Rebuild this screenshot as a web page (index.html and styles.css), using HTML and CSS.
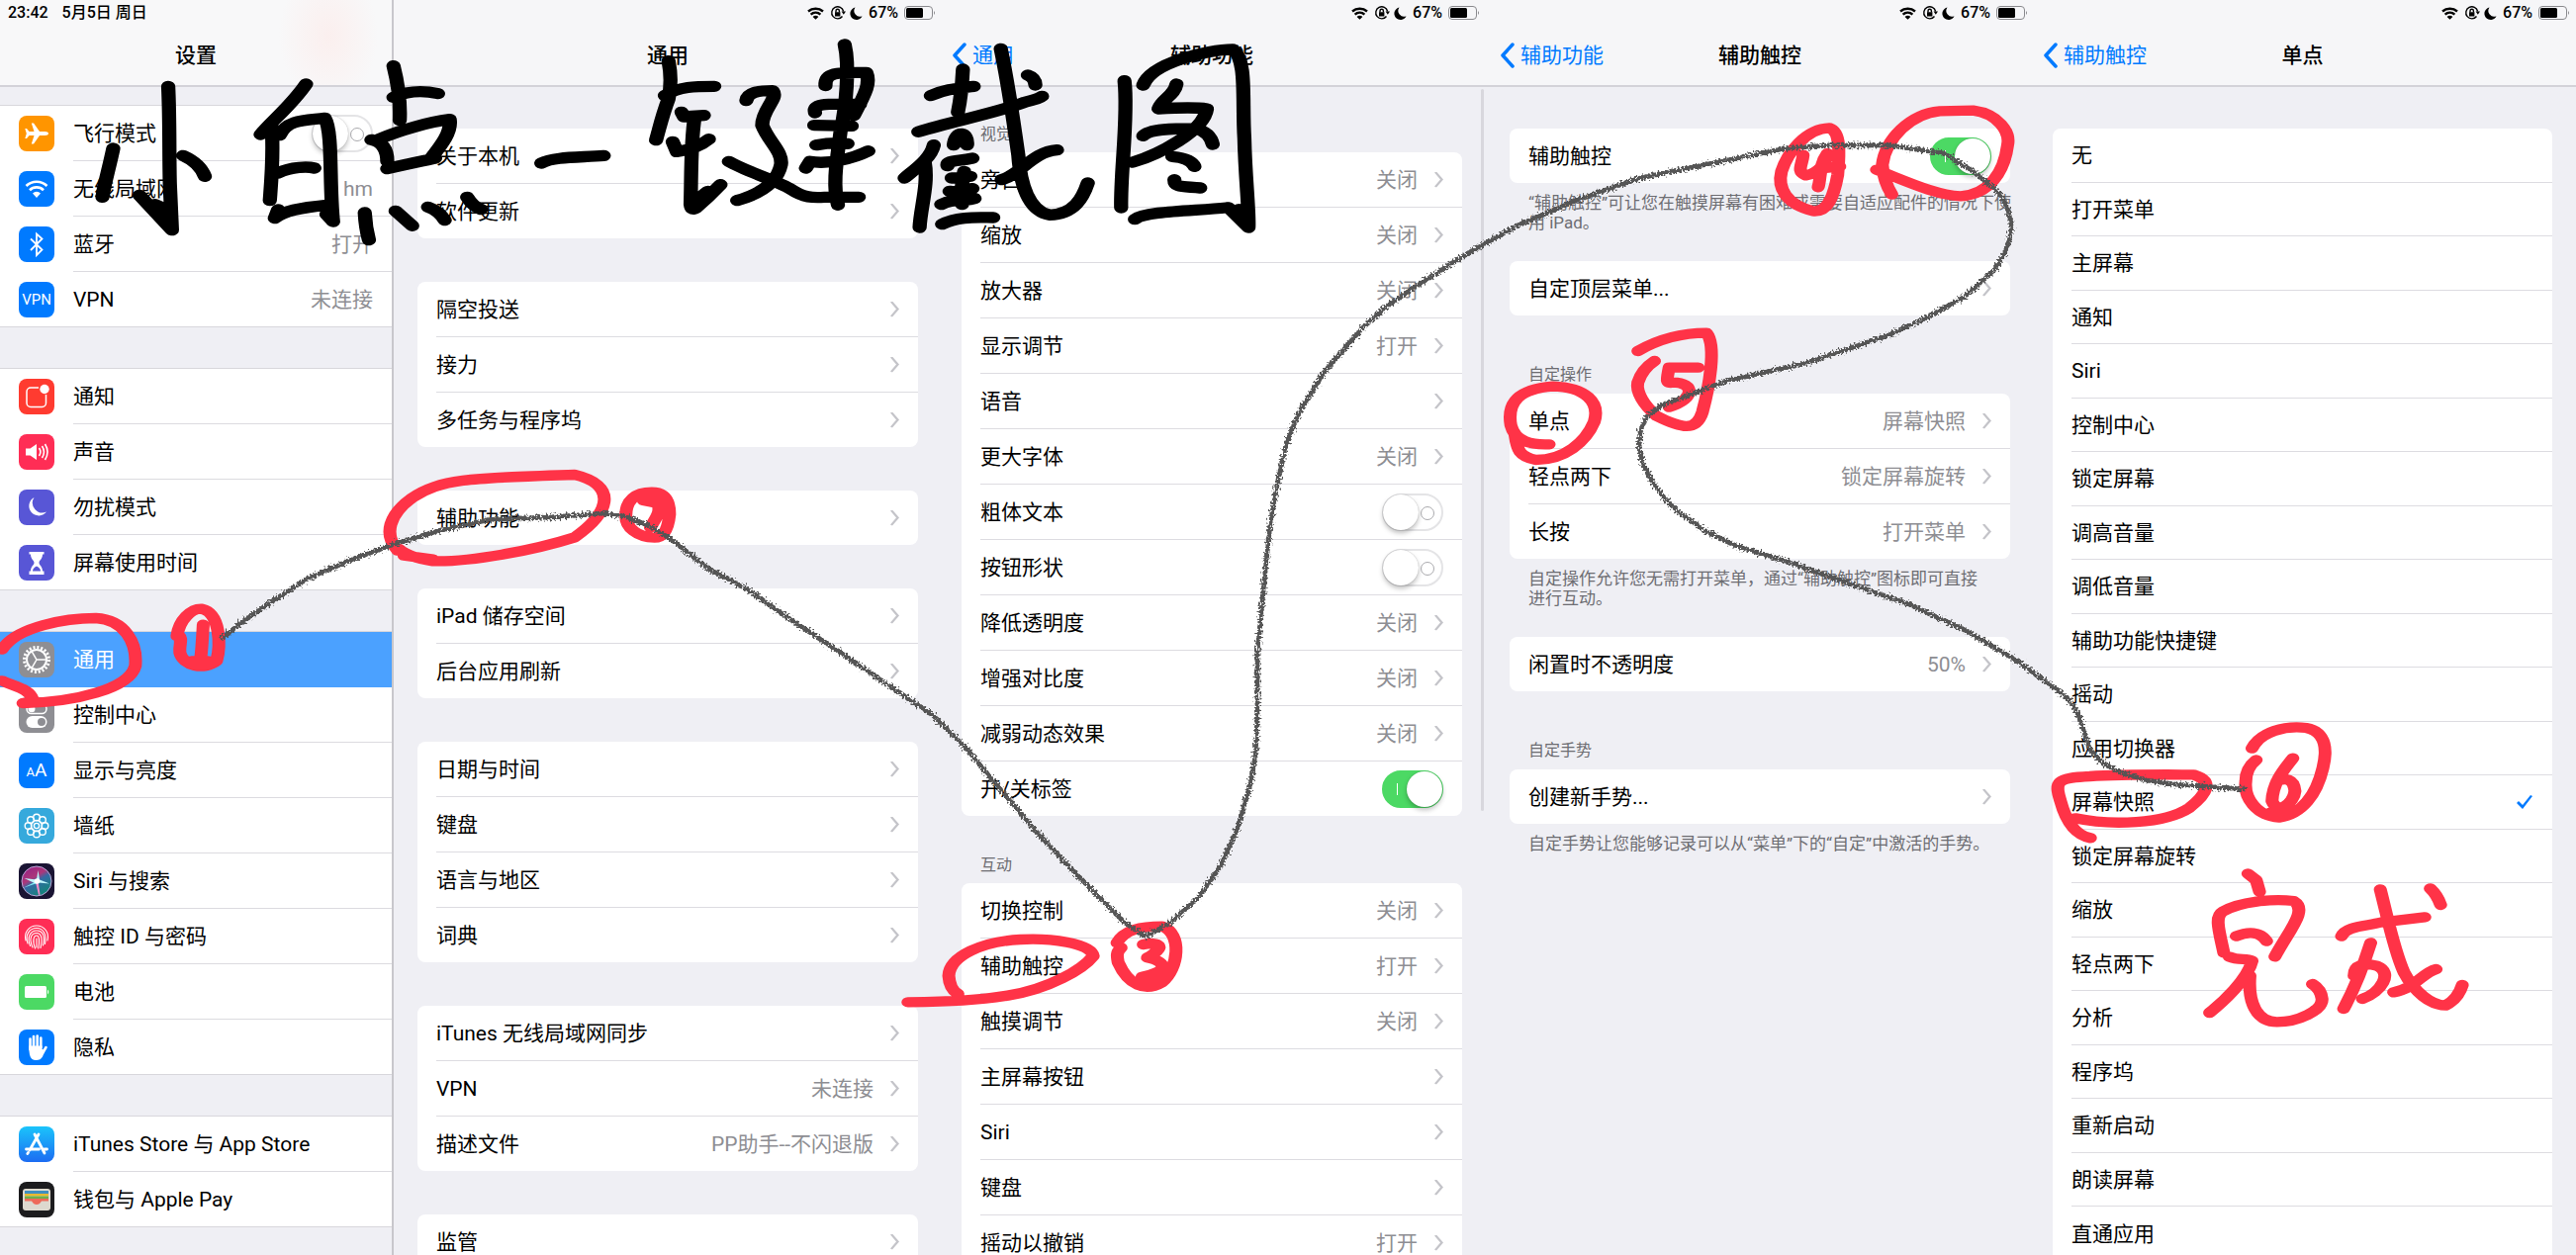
FILE: index.html
```html
<!DOCTYPE html>
<html lang="zh-CN">
<head>
<meta charset="utf-8">
<title>小白点一键截图</title>
<meta name="viewport" content="width=device-width, initial-scale=1">
<link rel="stylesheet" href="styles.css">
</head>
<body>
<svg class="defs" aria-hidden="true">
  <defs>
    <symbol id="status" viewBox="0 0 56 16">
      <g fill="none" stroke="#000" stroke-width="2.4">
        <path d="M1 6.5a11.500 11.500 0 0 1 15 0M3.600 9.600a7.500 7.500 0 0 1 9.800 0"/>
      </g>
      <path d="M5.600 12a4 4 0 0 1 5.800 0L8.500 14.800z"/>
      <g fill="none" stroke="#000" stroke-width="1.400">
        <path d="M35.500 11.500A6 6 0 1 1 36.600 6.500"/>
        <path d="M29 7.500V6a1.700 1.700 0 0 1 3.400 0v1.500"/>
      </g>
      <path d="M28 7.200h5.400v4.200H28zM34.600 6.500h4.400l-2.200 3.200z"/>
      <path d="M48.500 2.500a6.300 6.300 0 1 0 7 8.700 5.800 5.800 0 0 1-7-8.700z"/>
    </symbol>
    <symbol id="batt" viewBox="0 0 32 14">
      <rect x=".5" y=".5" width="28" height="13" rx="3.500" fill="none" stroke="#8a8a8e"/>
      <rect x="2" y="2" width="17" height="10" rx="1.500"/>
      <path d="M30 5q2 2 0 4z" fill="#8a8a8e"/>
    </symbol>
    <symbol id="back" viewBox="0 0 15 26"><path d="M13 2 3 13l10 11" fill="none" stroke="#007aff" stroke-width="3.500" stroke-linecap="round" stroke-linejoin="round"/></symbol>
    <linearGradient id="store" x2="0" y2="1"><stop stop-color="#1bc4fb"/><stop offset="1" stop-color="#1c6cf2"/></linearGradient>
    <linearGradient id="siri" x2=".6" y2="1"><stop stop-color="#b01f9a"/><stop offset=".45" stop-color="#d0408c"/><stop offset=".6" stop-color="#3a7fc0"/><stop offset="1" stop-color="#12a08c"/></linearGradient>
    <filter id="pencil" x="-5%" y="-5%" width="110%" height="110%">
      <feTurbulence type="fractalNoise" baseFrequency=".5" numOctaves="2" seed="4" result="n"/>
      <feDisplacementMap in="SourceGraphic" in2="n" scale="9" xChannelSelector="R" yChannelSelector="G"/>
    </filter>
  </defs>
</svg>

<main class="board">

<section class="panel side">
  <header class="bar">
    <div class="status"><span>23:42</span><span class="date">5月5日 周日</span></div>
    <div class="nav"><h1>设置</h1></div>
  </header>
  <div class="menu">
    <ul class="sgroup">
      <li><label class="srow"><svg class="ic" viewBox="0 0 36 36"><rect width="36" height="36" rx="8" fill="#ff9500"/><path fill="#fff" d="M30 18c0-1.200-1.500-2-3.500-2h-5.500L15 7.500h-2.200L15.500 16h-5L8 13H6.300l1.500 5-1.500 5H8l2.500-3h5l-2.700 8.500H15L21 20h5.500c2 0 3.500-.8 3.500-2z"/></svg><span class="sb"><span>飞行模式</span><input class="sw" type="checkbox"></span></label></li>
      <li><a class="srow" href="#"><svg class="ic" viewBox="0 0 36 36"><rect width="36" height="36" rx="8" fill="#007aff"/><g fill="none" stroke="#fff" stroke-width="2.600"><path d="M7.500 15a15 15 0 0 1 21 0M11 19.200a10 10 0 0 1 14 0"/></g><path fill="#fff" d="M14 22.500a5.500 5.500 0 0 1 8 0l-4 4.500z"/></svg><span class="sb"><span>无线局域网</span><span class="val">hm</span></span></a></li>
      <li><a class="srow" href="#"><svg class="ic" viewBox="0 0 36 36"><rect width="36" height="36" rx="8" fill="#007aff"/><path fill="none" stroke="#fff" stroke-width="1.800" d="m12 12.500 11.500 11L18 29V7.500l5.500 5L12 24"/></svg><span class="sb"><span>蓝牙</span><span class="val">打开</span></span></a></li>
      <li><a class="srow" href="#"><span class="ic txt vpn">VPN</span><span class="sb"><span>VPN</span><span class="val">未连接</span></span></a></li>
    </ul>
    <ul class="sgroup">
      <li><a class="srow" href="#"><svg class="ic" viewBox="0 0 36 36"><rect width="36" height="36" rx="8" fill="#ff3b30"/><path fill="none" stroke="#fff" stroke-width="1.500" d="M20 9h-8a4 4 0 0 0-4 4v11.500a4 4 0 0 0 4 4h11.500a4 4 0 0 0 4-4V16"/><circle cx="26" cy="10.500" r="4.700" fill="#fff"/></svg><span class="sb"><span>通知</span></span></a></li>
      <li><a class="srow" href="#"><svg class="ic" viewBox="0 0 36 36"><rect width="36" height="36" rx="8" fill="#ff2d55"/><path fill="#fff" d="M7 14.500h4.500L18 10v16l-6.500-4.500H7z"/><path fill="none" stroke="#fff" stroke-width="1.600" d="M20.500 14a7 7 0 0 1 0 8M23.500 12a11 11 0 0 1 0 12M26.500 10a15 15 0 0 1 0 16"/></svg><span class="sb"><span>声音</span></span></a></li>
      <li><a class="srow" href="#"><svg class="ic" viewBox="0 0 36 36"><rect width="36" height="36" rx="8" fill="#5856d6"/><path fill="#fff" d="M15.500 8a9.800 9.800 0 1 0 12.500 14.500A10 10 0 0 1 15.500 8z"/></svg><span class="sb"><span>勿扰模式</span></span></a></li>
      <li><a class="srow" href="#"><svg class="ic" viewBox="0 0 36 36"><rect width="36" height="36" rx="8" fill="#5856d6"/><path fill="#fff" d="M10.500 7h15v2.500H24c0 5-3.500 6-3.500 8.500s3.500 3.500 3.500 8.500h1.500V30h-15v-3.500H12c0-5 3.500-6 3.500-8.500S12 14.500 12 9.500h-1.500z"/><path fill="#5856d6" d="M14 26.500q0-3 4-5 4 2 4 5z"/></svg><span class="sb"><span>屏幕使用时间</span></span></a></li>
    </ul>
    <ul class="sgroup">
      <li class="on"><a class="srow" href="#" aria-current="page"><svg class="ic" viewBox="0 0 36 36"><rect width="36" height="36" rx="8" fill="#8e8e93"/><circle cx="18" cy="18" r="10" fill="none" stroke="#fff" stroke-width="2"/><circle cx="18" cy="18" r="12.500" fill="none" stroke="#fff" stroke-width="3" stroke-dasharray="2 1.927"/><path fill="none" stroke="#fff" stroke-width="1.500" d="M28 18H18l-5-8.700M18 18l-5 8.700"/></svg><span class="sb"><span>通用</span></span></a></li>
      <li><a class="srow" href="#"><svg class="ic" viewBox="0 0 36 36"><rect width="36" height="36" rx="8" fill="#8e8e93"/><rect x="8" y="7" width="20" height="9.500" rx="4.700" fill="none" stroke="#fff" stroke-width="1.500"/><circle cx="13" cy="11.700" r="3.500" fill="#fff"/><rect x="7.500" y="19" width="21" height="12" rx="6" fill="#fff"/><circle cx="23" cy="25" r="4" fill="#8e8e93"/></svg><span class="sb"><span>控制中心</span></span></a></li>
      <li><a class="srow" href="#"><span class="ic txt"><small>A</small>A</span><span class="sb"><span>显示与亮度</span></span></a></li>
      <li><a class="srow" href="#"><svg class="ic" viewBox="0 0 36 36"><rect width="36" height="36" rx="8" fill="#36a9dc"/><g fill="none" stroke="#fff" stroke-width="1.400"><circle cx="18" cy="18" r="2.600"/><circle cx="18" cy="9.500" r="3.300"/><circle cx="24" cy="12" r="3.300"/><circle cx="26.500" cy="18" r="3.300"/><circle cx="24" cy="24" r="3.300"/><circle cx="18" cy="26.500" r="3.300"/><circle cx="12" cy="24" r="3.300"/><circle cx="9.500" cy="18" r="3.300"/><circle cx="12" cy="12" r="3.300"/><circle cx="18" cy="18" r="5.500"/></g></svg><span class="sb"><span>墙纸</span></span></a></li>
      <li><a class="srow" href="#"><svg class="ic" viewBox="0 0 36 36"><rect width="36" height="36" rx="8" fill="#1a1433"/><circle cx="18" cy="18" r="15" fill="url(#siri)" opacity=".8"/><circle cx="18" cy="18" r="15" fill="none" stroke="#b9a6d8" stroke-width="1"/><path fill="#7fe8f0" d="M19 17.500 4 25l13-4.500z"/><path fill="#f08ac8" d="m17 19 3 13 1.500-.5L19.500 18z"/><path fill="#bff6fa" d="M18 16.500 19.500 7l1.500 9.500 10 4-11-1-3 1L5.500 15z"/><circle cx="18.500" cy="18" r="2.800" fill="#fff"/></svg><span class="sb"><span>Siri 与搜索</span></span></a></li>
      <li><a class="srow" href="#"><svg class="ic" viewBox="0 0 36 36"><rect width="36" height="36" rx="8" fill="#ff2d55"/><g fill="none" stroke="#fff" stroke-width="1.100" stroke-linecap="round"><path d="M7 22c-2-8 3-15 11-15s13 7 11 15M9 25c-3-9 2-15.500 9-15.500S28.500 16 26.500 25.500M11.500 27.500C8 19 11.500 12 18 12s9 6 6.500 15M14 29c-4-9-1.500-14.500 4-14.500S24 21 22 29.500M16.500 30C13.500 22 15 17 18 17s3 6 1.800 13M18 20v9"/></g></svg><span class="sb"><span>触控 ID 与密码</span></span></a></li>
      <li><a class="srow" href="#"><svg class="ic" viewBox="0 0 36 36"><rect width="36" height="36" rx="8" fill="#4cd964"/><rect x="6" y="12" width="22" height="12" rx="1.500" fill="#fff"/><path fill="#fff" d="M29 15.500q2.500 2.500 0 5z"/></svg><span class="sb"><span>电池</span></span></a></li>
      <li><a class="srow" href="#"><svg class="ic" viewBox="0 0 36 36"><rect width="36" height="36" rx="8" fill="#007aff"/><g stroke="#fff" stroke-width="2.600" stroke-linecap="round" fill="none"><path d="M11.500 20V9.500M15 18V7M18.700 18V6.500M22.300 18V8.500M27.500 18l-3.500 6"/></g><path fill="#fff" d="M10.200 16.500h13.400v3.500l3 1-2.600 6.500q-2 3.500-6.500 3.500-5.300 0-6.500-5.500-.8-4-.8-9z"/></svg><span class="sb"><span>隐私</span></span></a></li>
    </ul>
    <ul class="sgroup">
      <li><a class="srow" href="#"><svg class="ic" viewBox="0 0 36 36"><rect width="36" height="36" rx="8" fill="url(#store)"/><g stroke="#fff" stroke-width="2.800" stroke-linecap="round"><path d="m16 8 10 19M20 8l-9 16M7.500 23h13M26 23h2.500M9.500 26.500l-.7 1"/></g></svg><span class="sb"><span>iTunes Store 与 App Store</span></span></a></li>
      <li><a class="srow" href="#"><svg class="ic" viewBox="0 0 36 36"><rect width="36" height="36" rx="8" fill="#1c1c1e"/><rect x="4" y="7" width="28" height="22" rx="3" fill="#ddd9cf"/><path fill="#3f8fc0" d="M6 9h24v3H6z"/><path fill="#eab92f" d="M6 12h24v2.500H6z"/><path fill="#6fb04a" d="M6 14.500h24V17H6z"/><path fill="#ee6a5a" d="M6 17h24v2.500h-7q-2 3.500-5 3.500t-5-3.500H6z"/></svg><span class="sb"><span>钱包与 Apple Pay</span></span></a></li>
    </ul>
  </div>
</section>

<section class="panel">
  <header class="bar">
    <div class="status end"><svg class="st"><use href="#status"/></svg><span>67%</span><svg class="bt"><use href="#batt"/></svg></div>
    <div class="nav"><h1>通用</h1></div>
  </header>
  <div class="cards">
    <ul class="card">
      <li><a class="row go" href="#"><span>关于本机</span></a></li>
      <li><a class="row go" href="#"><span>软件更新</span></a></li>
    </ul>
    <ul class="card">
      <li><a class="row go" href="#"><span>隔空投送</span></a></li>
      <li><a class="row go" href="#"><span>接力</span></a></li>
      <li><a class="row go" href="#"><span>多任务与程序坞</span></a></li>
    </ul>
    <ul class="card">
      <li><a class="row go" href="#"><span>辅助功能</span></a></li>
    </ul>
    <ul class="card">
      <li><a class="row go" href="#"><span>iPad 储存空间</span></a></li>
      <li><a class="row go" href="#"><span>后台应用刷新</span></a></li>
    </ul>
    <ul class="card">
      <li><a class="row go" href="#"><span>日期与时间</span></a></li>
      <li><a class="row go" href="#"><span>键盘</span></a></li>
      <li><a class="row go" href="#"><span>语言与地区</span></a></li>
      <li><a class="row go" href="#"><span>词典</span></a></li>
    </ul>
    <ul class="card">
      <li><a class="row go" href="#"><span>iTunes 无线局域网同步</span></a></li>
      <li><a class="row go" href="#"><span>VPN</span><span class="val">未连接</span></a></li>
      <li><a class="row go" href="#"><span>描述文件</span><span class="val">PP助手--不闪退版</span></a></li>
    </ul>
    <ul class="card">
      <li><a class="row go" href="#"><span>监管</span></a></li>
    </ul>
  </div>
</section>

<section class="panel p3">
  <header class="bar">
    <div class="status end"><svg class="st"><use href="#status"/></svg><span>67%</span><svg class="bt"><use href="#batt"/></svg></div>
    <div class="nav"><a class="back" href="#"><svg><use href="#back"/></svg>通用</a><h1>辅助功能</h1></div>
  </header>
  <i class="scroll"></i>
  <div class="cards titled">
    <h2>视觉</h2>
    <ul class="card">
      <li><a class="row go" href="#"><span>旁白</span><span class="val">关闭</span></a></li>
      <li><a class="row go" href="#"><span>缩放</span><span class="val">关闭</span></a></li>
      <li><a class="row go" href="#"><span>放大器</span><span class="val">关闭</span></a></li>
      <li><a class="row go" href="#"><span>显示调节</span><span class="val">打开</span></a></li>
      <li><a class="row go" href="#"><span>语音</span></a></li>
      <li><a class="row go" href="#"><span>更大字体</span><span class="val">关闭</span></a></li>
      <li><label class="row"><span>粗体文本</span><input class="sw" type="checkbox"></label></li>
      <li><label class="row"><span>按钮形状</span><input class="sw" type="checkbox"></label></li>
      <li><a class="row go" href="#"><span>降低透明度</span><span class="val">关闭</span></a></li>
      <li><a class="row go" href="#"><span>增强对比度</span><span class="val">关闭</span></a></li>
      <li><a class="row go" href="#"><span>减弱动态效果</span><span class="val">关闭</span></a></li>
      <li><label class="row"><span>开/关标签</span><input class="sw" type="checkbox" checked></label></li>
    </ul>
    <h2>互动</h2>
    <ul class="card">
      <li><a class="row go" href="#"><span>切换控制</span><span class="val">关闭</span></a></li>
      <li><a class="row go" href="#"><span>辅助触控</span><span class="val">打开</span></a></li>
      <li><a class="row go" href="#"><span>触摸调节</span><span class="val">关闭</span></a></li>
      <li><a class="row go" href="#"><span>主屏幕按钮</span></a></li>
      <li><a class="row go" href="#"><span>Siri</span></a></li>
      <li><a class="row go" href="#"><span>键盘</span></a></li>
      <li><a class="row go" href="#"><span>摇动以撤销</span><span class="val">打开</span></a></li>
    </ul>
  </div>
</section>

<section class="panel p4">
  <header class="bar">
    <div class="status end"><svg class="st"><use href="#status"/></svg><span>67%</span><svg class="bt"><use href="#batt"/></svg></div>
    <div class="nav"><a class="back" href="#"><svg><use href="#back"/></svg>辅助功能</a><h1>辅助触控</h1></div>
  </header>
  <div class="cards noted">
    <ul class="card">
      <li><label class="row"><span>辅助触控</span><input class="sw" type="checkbox" checked></label></li>
    </ul>
    <p>“辅助触控”可让您在触摸屏幕有困难或需要自适应配件的情况下使<br>用 iPad。</p>
    <ul class="card">
      <li><a class="row go" href="#"><span>自定顶层菜单...</span></a></li>
    </ul>
    <h2>自定操作</h2>
    <ul class="card">
      <li><a class="row go" href="#"><span>单点</span><span class="val">屏幕快照</span></a></li>
      <li><a class="row go" href="#"><span>轻点两下</span><span class="val">锁定屏幕旋转</span></a></li>
      <li><a class="row go" href="#"><span>长按</span><span class="val">打开菜单</span></a></li>
    </ul>
    <p>自定操作允许您无需打开菜单，通过“辅助触控”图标即可直接<br>进行互动。</p>
    <ul class="card">
      <li><a class="row go" href="#"><span>闲置时不透明度</span><span class="val">50%</span></a></li>
    </ul>
    <h2>自定手势</h2>
    <ul class="card">
      <li><a class="row go" href="#"><span>创建新手势...</span></a></li>
    </ul>
    <p>自定手势让您能够记录可以从“菜单”下的“自定”中激活的手势。</p>
  </div>
</section>

<section class="panel p5">
  <header class="bar">
    <div class="status end"><svg class="st"><use href="#status"/></svg><span>67%</span><svg class="bt"><use href="#batt"/></svg></div>
    <div class="nav"><a class="back" href="#"><svg><use href="#back"/></svg>辅助触控</a><h1>单点</h1></div>
  </header>
  <div class="cards">
    <ul class="card pick">
      <li><label class="row"><span>无</span><input type="radio" name="tap"></label></li>
      <li><label class="row"><span>打开菜单</span><input type="radio" name="tap"></label></li>
      <li><label class="row"><span>主屏幕</span><input type="radio" name="tap"></label></li>
      <li><label class="row"><span>通知</span><input type="radio" name="tap"></label></li>
      <li><label class="row"><span>Siri</span><input type="radio" name="tap"></label></li>
      <li><label class="row"><span>控制中心</span><input type="radio" name="tap"></label></li>
      <li><label class="row"><span>锁定屏幕</span><input type="radio" name="tap"></label></li>
      <li><label class="row"><span>调高音量</span><input type="radio" name="tap"></label></li>
      <li><label class="row"><span>调低音量</span><input type="radio" name="tap"></label></li>
      <li><label class="row"><span>辅助功能快捷键</span><input type="radio" name="tap"></label></li>
      <li><label class="row"><span>摇动</span><input type="radio" name="tap"></label></li>
      <li><label class="row"><span>应用切换器</span><input type="radio" name="tap"></label></li>
      <li><label class="row"><span>屏幕快照</span><input type="radio" name="tap" checked></label></li>
      <li><label class="row"><span>锁定屏幕旋转</span><input type="radio" name="tap"></label></li>
      <li><label class="row"><span>缩放</span><input type="radio" name="tap"></label></li>
      <li><label class="row"><span>轻点两下</span><input type="radio" name="tap"></label></li>
      <li><label class="row"><span>分析</span><input type="radio" name="tap"></label></li>
      <li><label class="row"><span>程序坞</span><input type="radio" name="tap"></label></li>
      <li><label class="row"><span>重新启动</span><input type="radio" name="tap"></label></li>
      <li><label class="row"><span>朗读屏幕</span><input type="radio" name="tap"></label></li>
      <li><label class="row"><span>直通应用</span><input type="radio" name="tap"></label></li>
    </ul>
  </div>
</section>

<!-- freehand marks: brush title, numbered circles and the pencil route between them -->
<svg class="ink" viewBox="0 0 2604 1269" role="img" aria-label="小白点一键截图：①通用 ②辅助功能 ③辅助触控 ④打开 ⑤单点 ⑥屏幕快照，完成">
  <svg class="brush" x="0" y="0" width="660" height="420" viewBox="0 0 1568 1260" preserveAspectRatio="none">
    <path d="M404 262C408 360 406 480 408 560L413 698 335 592M413 698 372 620 408 640M272 450C262 510 250 560 246 598M440 472Q480 495 492 535"/>
    <path d="M735 255C700 320 650 370 626 408M652 380C658 460 652 540 648 608M672 410C690 360 740 365 780 358 800 400 790 560 800 672M668 525C700 505 740 505 755 510M660 662C680 640 720 630 785 622M668 636 660 662M784 650 800 672"/>
    <path d="M945 200C955 250 962 310 960 365M945 295C980 275 1020 275 1052 284M892 424C915 430 930 450 930 490M910 422C960 395 1030 370 1080 362 1085 400 1060 440 1035 480M930 512C970 500 1010 490 1045 480M876 645Q878 690 886 728M950 640 990 685M1028 628Q1055 640 1068 668M1122 598Q1135 625 1155 635M1300 495C1330 475 1390 478 1450 472"/>
  </svg>
  <svg class="brush" x="640" y="0" width="660" height="420" viewBox="0 0 1568 1260" preserveAspectRatio="none">
    <path d="M85 185C92 230 92 260 85 300 70 350 65 380 55 425M76 290C110 262 150 262 195 262M116 340 122 354 170 350M148 355C138 430 140 540 138 620Q140 640 150 632 180 600 210 560M150 610 180 580M95 430 105 460C140 455 165 440 182 422"/>
    <path d="M272 305C275 280 300 275 335 275 350 300 310 330 310 380 325 430 360 460 355 500 345 560 300 590 250 608M230 490C270 520 350 550 380 575 410 600 430 600 460 598L542 598"/>
    <path d="M508 135C520 200 512 320 498 400 490 480 478 560 492 622M462 260C460 215 500 220 560 220 570 250 560 280 530 350M437 342C430 310 470 315 545 316M435 380 525 382M440 440Q480 430 515 436M415 510 425 490C470 500 530 480 565 458"/>
    <path d="M715 290C750 270 780 268 818 262M792 210C790 260 785 310 780 340M685 400C760 370 880 340 940 310Q975 300 982 292M722 440C715 480 680 510 652 540M700 490C710 560 690 630 688 690M770 440C775 390 805 400 802 440M755 503C752 485 780 490 815 480M765 540C790 540 800 535 810 535M760 580C780 585 800 575 815 572M740 620C770 600 800 612 820 602M795 520C790 560 785 590 790 620M742 680C780 655 830 660 865 660"/>
    <path d="M883 148C900 250 915 380 925 470 930 560 950 640 1000 652 1060 650 1080 600 1092 555M1018 455C960 460 930 530 885 545M948 228Q965 235 966 258"/>
    <path d="M1180 245C1190 350 1170 520 1172 630M1225 258C1245 190 1380 150 1440 150 1475 180 1462 300 1468 420 1470 540 1480 640 1478 690L1430 630M1478 690 1455 635M1205 665C1230 640 1350 640 1425 630M1305 255C1300 290 1270 300 1262 330 1290 328 1350 325 1378 330 1370 400 1260 470 1200 492M1225 412C1240 390 1300 390 1350 390Q1385 400 1392 438M1295 475Q1340 480 1348 505M1300 545C1300 570 1320 565 1362 570"/>
  </svg>
  <svg class="red" x="0" y="420" width="660" height="420" viewBox="0 0 1568 1260" preserveAspectRatio="none">
    <path d="M5 710C40 640 160 615 230 615 300 620 330 690 325 760 310 830 180 870 55 873M5 805C40 825 70 830 78 860"/>
    <path d="M425 670C430 620 460 585 485 587 530 600 530 700 520 745 490 775 440 760 432 720 430 690 440 680 428 665M488 635C486 680 485 710 482 735M460 745 500 745"/>
    <path d="M955 410C920 360 935 300 990 250 1060 190 1140 190 1380 180 1480 210 1470 290 1380 370 1280 410 1130 445 1040 442Q980 430 958 405M970 425 1040 437"/>
    <path d="M1503 305C1503 255 1528 233 1565 233 1600 233 1608 262 1608 300 1604 350 1592 371 1572 371 1530 370 1503 340 1503 305ZM1545 258 1578 266C1590 290 1575 310 1562 340"/>
  </svg>
  <svg class="red" x="640" y="840" width="660" height="429" viewBox="0 0 1568 1287" preserveAspectRatio="none">
    <path d="M1162 340C1180 300 1220 290 1270 290 1320 310 1310 420 1270 460 1230 490 1190 470 1165 400 1162 380 1160 370 1172 355M1225 345C1260 335 1285 350 1235 385 1290 400 1280 430 1222 443M1220 462 1262 450"/>
    <path d="M660 520C760 518 830 515 900 500 1000 480 1080 420 1105 380 1100 340 1000 325 930 330 840 335 760 380 758 440Q760 480 780 495"/>
  </svg>
  <svg class="red" x="1300" y="0" width="660" height="420" viewBox="0 0 1568 1260" preserveAspectRatio="none">
    <path d="M1305 388C1335 400 1328 480 1325 530 1315 600 1300 645 1265 640 1200 620 1180 570 1190 520 1205 460 1250 390 1305 388M1242 470C1240 500 1225 520 1248 532 1280 525 1300 490 1300 465 1280 500 1285 540 1278 568M1290 510 1330 505"/>
    <path d="M1455 590Q1435 550 1432 500C1440 420 1500 345 1570 337L1650 335C1710 345 1740 400 1733 440 1725 520 1690 590 1620 595 1560 592 1490 550 1418 515"/>
    <path d="M845 1065C900 1025 960 1010 1010 1010 1035 1050 1015 1180 1000 1250 985 1310 950 1300 890 1262 860 1230 840 1190 845 1160Q855 1120 885 1095M990 1115 920 1115C915 1150 910 1165 930 1160 980 1160 985 1210 920 1235"/>
    <path d="M632 1348C590 1350 550 1340 540 1290 530 1220 560 1180 640 1172 720 1175 755 1220 740 1280 720 1340 670 1395 600 1395 560 1385 555 1365 550 1320"/>
  </svg>
  <svg class="red" x="1944" y="420" width="660" height="420" viewBox="0 0 1568 1260" preserveAspectRatio="none">
    <path d="M790 1010C810 960 870 940 920 948 970 960 970 1020 960 1070 945 1150 910 1210 855 1220 800 1215 770 1160 775 1110 775 1080 785 1060 800 1045M888 1040C870 1070 840 1110 838 1170 850 1210 890 1180 893 1140 890 1100 870 1100 850 1110M835 1205 875 1200"/>
    <path d="M402 1282C370 1275 345 1240 330 1170 315 1110 320 1100 400 1095 480 1088 600 1090 650 1090 700 1110 680 1150 640 1190 580 1240 450 1245 365 1222"/>
  </svg>
  <svg class="red" x="1944" y="840" width="660" height="429" viewBox="0 0 1568 1287" preserveAspectRatio="none">
    <path d="M780 130 800 150 808 185M722 370C710 300 700 260 720 245 760 215 840 205 890 213 925 240 880 300 845 382M752 320C780 305 810 305 825 335M735 382C760 395 775 385 790 395 780 450 720 520 688 552M785 440C780 520 800 580 850 580 900 580 960 545 958 510Q955 480 935 465"/>
    <path d="M1005 320C1015 290 1060 290 1100 278L1205 262M1098 178C1115 260 1130 360 1155 430 1180 490 1220 530 1255 530Q1285 510 1295 468M1218 175Q1235 195 1243 225M1075 340C1060 400 1040 470 1010 540M1035 440C1035 405 1060 400 1090 410 1130 430 1100 490 1055 510M1232 420C1200 430 1180 480 1130 490"/>
  </svg>
  <g class="lead" filter="url(#pencil)">
    <path id="route" d="M225 645 246 628 269 612 311 585 358 565 396 551 442 537 497 525 556 523 610 519 631 522 655 531 678 545 716 575 754 595 800 627 850 660 901 695 943 723 977 757 1002 787 1044 837 1072 867 1099 895 1137 933 1158 947 1183 933 1212 907 1233 877 1250 840 1263 797 1269 765 1271 730 1271 660 1278 587 1284 530 1291 490 1300 450 1313 417 1338 377 1376 333 1400 311 1426 293 1477 260 1536 227 1595 202 1658 180 1721 167 1805 150 1847 147 1910 147 1965 155 1994 173 2016 190 2025 201 2030 213 2033 227 2032 240 2026 257 2016 273 1986 300 1944 323 1906 340 1826 367 1746 385 1679 410 1664 422 1658 436 1657 453 1661 470 1670 487 1682 503 1696 517 1724 537 1755 552 1813 570 1889 597 1930 611 1986 637 2037 667 2079 697 2092 708 2100 720 2107 740 2112 757 2126 772 2146 782 2170 789 2197 793 2270 798"/>
    <use class="grain" href="#route"/>
  </g>
</svg>
</main>
</body>
</html>
```

FILE: styles.css
```css
* { box-sizing: border-box; }
body {
  margin: 0;
  background: #efeff4;
  color: #000;
  font: 21px/28px Roboto, "Noto Sans CJK SC", sans-serif;
}
ul, h1, h2, p { margin: 0; padding: 0; font-size: inherit; font-weight: 400; list-style: none; }
a { color: inherit; text-decoration: none; }
.defs { position: absolute; width: 0; height: 0; }

.board {
  position: relative;
  display: grid;
  grid-template-columns: 398fr 554fr 550fr 554fr 548fr;
  height: 100vh;
  overflow: hidden;
}
.panel { --l: 24px; --r: 24px; position: relative; min-width: 0; overflow: hidden; }
.p3 { --l: 20px; }
.p5 { --l: 19px; }
.side { border-right: 2px solid #c8c7cc; }

/* status line and title */
.bar {
  height: 88px;
  background: #f6f6f8;
  border-bottom: 2px solid #d3d2d8;
}
.side .bar { background: radial-gradient(50px 70px at 332px 36px, #fbefee, #f8f8f9); }
.status {
  display: flex;
  align-items: center;
  height: 26px;
  padding: 0 6px 0 8px;
  font-size: 16px;
  font-weight: 500;
}
.status.end { justify-content: flex-end; gap: 6px; }
.date { margin-left: 14px; }
.st { width: 56px; height: 16px; }
.bt { width: 32px; height: 14px; }
.nav {
  display: grid;
  grid-template-columns: 1fr auto 1fr;
  align-items: center;
  height: 60px;
  padding: 0 calc(var(--r) - 10px) 0 calc(var(--l) - 10px);
}
.side .nav { padding: 0; }
.nav h1 { grid-column: 2; font-weight: 500; }
.back { display: flex; align-items: center; gap: 6px; color: #007aff; }
.back svg { width: 15px; height: 26px; }

/* left menu */
.menu { display: grid; gap: 41px; padding-top: 18px; }
.sgroup { background: #fff; border-top: 1px solid #d8d7dc; }
.sgroup li:last-child { border-bottom: 1px solid #d8d7dc; }
.srow { display: flex; align-items: center; gap: 19px; padding-left: 19px; }
.ic { flex: none; width: 36px; height: 36px; }
.txt {
  border-radius: 8px;
  background: #007aff;
  color: #fff;
  font-size: 19px;
  line-height: 36px;
  text-align: center;
}
.txt small { font-size: 13px; }
.vpn { font-size: 15px; }
.sb {
  flex: 1;
  display: flex;
  align-items: center;
  justify-content: space-between;
  height: 56px;
  padding-right: 19px;
  border-bottom: 1px solid #dcdbe0;
}
li:last-child > .srow .sb { height: 55px; border: 0; }
.on { background: #4ba1ff; color: #fff; }
.on .sb { border-color: transparent; }
.val { color: #8e8e93; }

/* rounded cards */
.cards { display: grid; gap: 44px; padding: 42px var(--r) 0 var(--l); }
.card { background: #fff; border-radius: 8px; padding-left: 19px; }
.row {
  display: flex;
  align-items: center;
  height: 56px;
  padding-right: 19px;
  border-bottom: 1px solid #dddce1;
}
li:last-child > .row { height: 55px; border: 0; }
.row > :first-child { flex: 1; }
.go::after {
  content: "";
  width: 9px;
  height: 16px;
  margin-left: 17px;
  background: #c4c4c9;
  clip-path: polygon(0 1px, 2px 0, 9px 8px, 2px 16px, 0 15px, 6px 8px);
}
h2, p { padding-left: 19px; color: #6d6d72; font-size: 16px; line-height: 20px; }
.titled, .noted { display: block; }
h2 { padding-bottom: 8px; }
.titled { padding-top: 38px; }
.titled .card + h2 { padding-top: 40px; }
.noted .card + h2 { padding-top: 50px; padding-bottom: 9px; }
.noted p { padding-top: 10px; padding-bottom: 29px; font-size: 17px; white-space: nowrap; }
.pick li:nth-child(even) > .row { height: 54px; }
.pick li:nth-child(odd) > .row { height: 55px; }

.scroll {
  position: absolute;
  top: 90px;
  right: 2px;
  width: 3px;
  height: 730px;
  border-radius: 2px;
  background: #d8d7dd;
}

/* controls */
.sw {
  appearance: none;
  position: relative;
  flex: none;
  width: 62px;
  height: 38px;
  margin: 0;
  border-radius: 19px;
  background: #fff;
  border: 2px solid #e4e4e6;
}
.sw::before {
  content: "";
  position: absolute;
  top: -1px;
  left: -1px;
  width: 36px;
  height: 36px;
  border-radius: 50%;
  background: #fff;
  box-shadow: 0 3px 5px rgba(0, 0, 0, .25), 0 0 1px rgba(0, 0, 0, .3);
}
.sw::after {
  content: "";
  position: absolute;
  top: 11px;
  right: 7px;
  width: 12px;
  height: 12px;
  border: 1px solid #a9a9ad;
  border-radius: 50%;
}
.sw:checked { background: #4cd964; border-color: #4cd964; }
.sw:checked::before { left: auto; right: -1px; }
.sw:checked::after { right: auto; left: 13px; width: 1px; border-width: 0 0 0 1px; border-color: #fff; border-radius: 0; }
.pick input {
  appearance: none;
  width: 17px;
  height: 14px;
  margin: 0;
}
.pick input:checked {
  background: #007aff;
  clip-path: polygon(0 8px, 2px 6px, 6px 10px, 14px 0, 16px 1px, 6px 14px);
}

/* freehand layer */
.ink { position: absolute; top: 0; left: 0; width: 100%; height: auto; pointer-events: none; }
.ink svg { overflow: visible; }
.ink path { fill: none; stroke-linecap: round; stroke-linejoin: round; }
.brush path { stroke: #000; stroke-width: 34px; }
.red path { stroke: #ff3347; stroke-width: 31px; }
.lead { fill: none; stroke: #3a3a3a; stroke-width: 2px; }
.ink .grain { stroke: #555; stroke-width: 5px; stroke-dasharray: 1 3; }
```
